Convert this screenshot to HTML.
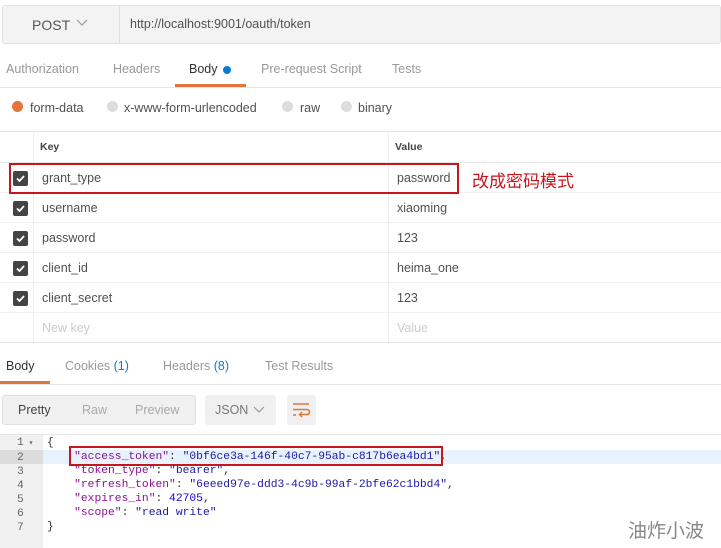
<!DOCTYPE html>
<html><head><meta charset="utf-8"><style>
*{margin:0;padding:0;box-sizing:border-box}
body{width:721px;height:548px;background:#fff;font-family:"Liberation Sans","Noto Sans CJK SC",sans-serif;font-size:12.5px;color:#505050;position:relative;overflow:hidden}
.a{position:absolute;white-space:nowrap}
.cb{position:absolute;left:13px;width:15px;height:15px;background:#444;border-radius:2px}
.cb svg{position:absolute;left:2px;top:2px}
.hl{position:absolute;left:0;width:721px;height:1px;background:#e6e6e6}
.mono{font-family:"Liberation Mono",monospace;font-size:11.3px}
.s{color:#1a1aa6}
.k{color:#881391}
</style></head><body>
<div class="a" style="left:2px;top:5px;width:719px;height:39px;background:#f3f3f3;border:1px solid #e2e2e2;border-radius:3px"></div>
<div class="a" style="left:119px;top:6px;width:1px;height:37px;background:#e0e0e0"></div>
<div class="a" style="left:32px;top:17px;font-size:14px;color:#555">POST</div>
<svg class="a" style="left:76px;top:19px" width="12" height="8"><path d="M1 1L6 6L11 1" stroke="#999" fill="none" stroke-width="1.2"/></svg>
<div class="a" style="left:130px;top:17px;font-size:12.5px;color:#505050">http://localhost:9001/oauth/token</div>
<div class="a" style="left:6px;top:62px;color:#999">Authorization</div>
<div class="a" style="left:113px;top:62px;color:#999">Headers</div>
<div class="a" style="left:189px;top:62px;color:#333">Body</div>
<div class="a" style="left:223px;top:66px;width:8px;height:8px;border-radius:50%;background:#0b7ad1"></div>
<div class="a" style="left:261px;top:62px;color:#999">Pre-request Script</div>
<div class="a" style="left:392px;top:62px;color:#999">Tests</div>
<div class="hl" style="top:87px"></div>
<div class="a" style="left:175px;top:84px;width:71px;height:3px;background:#e0763b"></div>
<div class="a" style="left:12px;top:101px;width:11px;height:11px;border-radius:50%;background:#e0763b"></div>
<div class="a" style="left:30px;top:101px;color:#505050">form-data</div>
<div class="a" style="left:107px;top:101px;width:11px;height:11px;border-radius:50%;background:#ddd"></div>
<div class="a" style="left:124px;top:101px">x-www-form-urlencoded</div>
<div class="a" style="left:282px;top:101px;width:11px;height:11px;border-radius:50%;background:#ddd"></div>
<div class="a" style="left:300px;top:101px">raw</div>
<div class="a" style="left:341px;top:101px;width:11px;height:11px;border-radius:50%;background:#ddd"></div>
<div class="a" style="left:358px;top:101px">binary</div>
<div class="hl" style="top:131px"></div>
<div class="hl" style="top:162px"></div>
<div class="hl" style="top:192px;background:#f0f0f0"></div>
<div class="hl" style="top:222px;background:#f0f0f0"></div>
<div class="hl" style="top:252px;background:#f0f0f0"></div>
<div class="hl" style="top:282px;background:#f0f0f0"></div>
<div class="hl" style="top:312px;background:#f0f0f0"></div>
<div class="hl" style="top:342px"></div>
<div class="a" style="left:33px;top:131px;width:1px;height:211px;background:#eee"></div>
<div class="a" style="left:388px;top:131px;width:1px;height:211px;background:#eee"></div>
<div class="a" style="left:40px;top:141px;font-size:10.5px;font-weight:bold;color:#444">Key</div>
<div class="a" style="left:395px;top:141px;font-size:10.5px;font-weight:bold;color:#444">Value</div>
<div class="cb" style="top:171px"><svg width="11" height="11"><path d="M2 5.5L4.5 8L9 3" stroke="#fff" stroke-width="1.8" fill="none"/></svg></div>
<div class="cb" style="top:201px"><svg width="11" height="11"><path d="M2 5.5L4.5 8L9 3" stroke="#fff" stroke-width="1.8" fill="none"/></svg></div>
<div class="cb" style="top:231px"><svg width="11" height="11"><path d="M2 5.5L4.5 8L9 3" stroke="#fff" stroke-width="1.8" fill="none"/></svg></div>
<div class="cb" style="top:261px"><svg width="11" height="11"><path d="M2 5.5L4.5 8L9 3" stroke="#fff" stroke-width="1.8" fill="none"/></svg></div>
<div class="cb" style="top:291px"><svg width="11" height="11"><path d="M2 5.5L4.5 8L9 3" stroke="#fff" stroke-width="1.8" fill="none"/></svg></div>
<div class="a" style="left:42px;top:171px">grant_type</div><div class="a" style="left:397px;top:171px">password</div>
<div class="a" style="left:42px;top:201px">username</div><div class="a" style="left:397px;top:201px">xiaoming</div>
<div class="a" style="left:42px;top:231px">password</div><div class="a" style="left:397px;top:231px">123</div>
<div class="a" style="left:42px;top:261px">client_id</div><div class="a" style="left:397px;top:261px">heima_one</div>
<div class="a" style="left:42px;top:291px">client_secret</div><div class="a" style="left:397px;top:291px">123</div>
<div class="a" style="left:42px;top:321px;color:#ccc">New key</div><div class="a" style="left:397px;top:321px;color:#ccc">Value</div>
<div class="a" style="left:9px;top:163px;width:450px;height:31px;border:2px solid #c8161d"></div>
<div class="a" style="left:472px;top:167px;font-size:17px;color:#c8161d">改成密码模式</div>
<div class="a" style="left:6px;top:359px;color:#333">Body</div>
<div class="a" style="left:65px;top:359px;color:#999">Cookies <span style="color:#0b7ad1">(1)</span></div>
<div class="a" style="left:163px;top:359px;color:#999">Headers <span style="color:#0b7ad1">(8)</span></div>
<div class="a" style="left:265px;top:359px;color:#999">Test Results</div>
<div class="hl" style="top:384px"></div>
<div class="a" style="left:0;top:381px;width:50px;height:3px;background:#e0763b"></div>
<div class="a" style="left:2px;top:395px;width:194px;height:30px;background:#f0f0f0;border:1px solid #e0e0e0;border-radius:3px"></div>
<div class="a" style="left:18px;top:403px;color:#444">Pretty</div>
<div class="a" style="left:82px;top:403px;color:#aaa">Raw</div>
<div class="a" style="left:135px;top:403px;color:#aaa">Preview</div>
<div class="a" style="left:205px;top:395px;width:71px;height:30px;background:#f0f0f0;border-radius:3px"></div>
<div class="a" style="left:215px;top:403px;color:#777">JSON</div>
<svg class="a" style="left:253px;top:406px" width="12" height="8"><path d="M1 1L6 6L11 1" stroke="#999" fill="none" stroke-width="1.2"/></svg>
<div class="a" style="left:287px;top:395px;width:29px;height:30px;background:#f0f0f0;border-radius:3px"></div>
<svg class="a" style="left:292px;top:401px" width="19" height="18"><path d="M1 3H17M1 8.5H15a2.5 2.5 0 0 1 0 5H8M1 14H4" stroke="#e0763b" stroke-width="1.6" fill="none"/><path d="M10 11L7.5 13.5L10 16" stroke="#e0763b" stroke-width="1.4" fill="none"/></svg>
<div class="a" style="left:0;top:434px;width:721px;height:1px;background:#e6e6e6"></div>
<div class="a" style="left:0;top:435px;width:43px;height:113px;background:#f0f0f0"></div>
<div class="a" style="left:43px;top:450px;width:678px;height:14px;background:#e8f2ff"></div>
<div class="a" style="left:0;top:450px;width:43px;height:14px;background:#dcdcdc"></div>
<div class="a mono" style="left:0;top:436px;width:43px;line-height:14px;color:#666">
<div style="padding-left:17px">1<span style="font-size:8px"> ▾</span></div>
<div style="padding-left:17px">2</div><div style="padding-left:17px">3</div><div style="padding-left:17px">4</div><div style="padding-left:17px">5</div><div style="padding-left:17px">6</div><div style="padding-left:17px">7</div></div>
<div class="a mono" style="left:47px;top:436px;line-height:14px;color:#333;white-space:pre">{
    <span class="k">"access_token"</span>: <span class="s">"0bf6ce3a-146f-40c7-95ab-c817b6ea4bd1"</span>,
    <span class="k">"token_type"</span>: <span class="s">"bearer"</span>,
    <span class="k">"refresh_token"</span>: <span class="s">"6eeed97e-ddd3-4c9b-99af-2bfe62c1bbd4"</span>,
    <span class="k">"expires_in"</span>: <span style="color:#1c00cf">42705</span>,
    <span class="k">"scope"</span>: <span class="s">"read write"</span>
}</div>
<div class="a" style="left:69px;top:446px;width:374px;height:20px;border:2px solid #c8161d"></div>
<div class="a" style="left:628px;top:516px;font-size:19px;color:#888">油炸小波</div>
</body></html>
